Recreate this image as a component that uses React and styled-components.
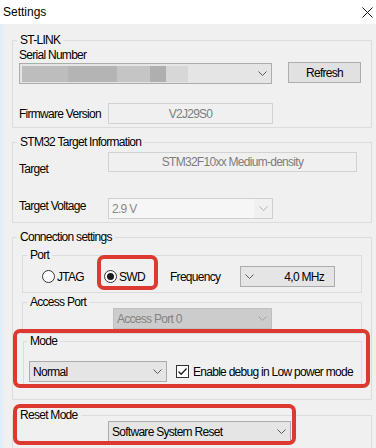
import React from "react";
import styled, { createGlobalStyle } from "styled-components";

const Global = createGlobalStyle`
  html, body { margin: 0; padding: 0; background: #f0f0f0; }
  body { overflow: hidden; }
  * { box-sizing: border-box; }
`;

const FONT = `"Liberation Sans", Arial, sans-serif`;
const RED = "#dc3a31";

const Window = styled.div`
  width: 376px;
  height: 448px;
  overflow: hidden;
  display: flex;
  flex-direction: column;
  background: #f0f0f0;
  font-family: ${FONT};
  font-size: 12px;
  letter-spacing: -0.72px;
  color: #000;
`;

const TitleBar = styled.div`
  flex: none;
  height: 24px;
  background: #fff;
  display: flex;
  align-items: center;
  justify-content: space-between;
  padding: 0 3px;
  font-size: 12px;
  letter-spacing: 0;
`;

const Body = styled.div`
  flex: 1;
  display: flex;
  flex-direction: column;
  border-left: 3px solid #e1eef9;
  padding: 0 4px 0 9px;
`;

const Group = styled.fieldset`
  flex: none;
  margin: ${(p) => p.$top || 0}px 0 0 ${(p) => p.$left || 0}px;
  width: ${(p) => (p.$width ? `${p.$width}px` : "auto")};
  padding: 0;
  border: 1px solid #dcdcdc;
  min-width: 0;
`;

const Legend = styled.legend`
  margin-left: ${(p) => (p.$inset != null ? p.$inset : 4)}px;
  padding: 0 3px;
  height: 12px;
  line-height: 12px;
  white-space: nowrap;
`;

const Content = styled.div`
  height: ${(p) => p.$h}px;
  padding-left: ${(p) => p.$pl || 0}px;
  display: flex;
  flex-direction: column;
  align-items: flex-start;
`;

const Row = styled.div`
  flex: none;
  display: flex;
  align-items: ${(p) => p.$align || "flex-start"};
  margin-top: ${(p) => p.$mt || 0}px;
  height: ${(p) => (p.$h ? `${p.$h}px` : "auto")};
`;

const Caption = styled.span`
  display: block;
  flex: none;
  width: ${(p) => (p.$w ? `${p.$w}px` : "auto")};
  height: 14px;
  line-height: 14px;
  margin-top: ${(p) => p.$mt || 0}px;
  white-space: nowrap;
`;

const ReadOnlyField = styled.div`
  flex: none;
  width: ${(p) => p.$w}px;
  height: ${(p) => p.$h || 21}px;
  display: flex;
  align-items: center;
  justify-content: center;
  border: 1px solid #d2d2d2;
  background: #f0f0f0;
  color: #7d7d7d;
  white-space: nowrap;
`;

const tones = {
  normal: { bg: "#e5e5e5", border: "#acacac", color: "#000", arrow: "#5a5a5a" },
  inactive: { bg: "#cccccc", border: "#bfbfbf", color: "#838383", arrow: "#a2a2a2" },
  disabled: { bg: "#f0f0f0", border: "#cfcfcf", color: "#8a8a8a", arrow: "#b0b0b0" },
};

const ComboBox = styled.div`
  flex: none;
  width: ${(p) => p.$w}px;
  height: ${(p) => p.$h || 21}px;
  margin-left: ${(p) => p.$ml || 0}px;
  margin-top: ${(p) => p.$mt || 0}px;
  display: flex;
  flex-direction: ${(p) => (p.$arrowLeft ? "row-reverse" : "row")};
  align-items: stretch;
  border: 1px solid ${(p) => tones[p.$tone || "normal"].border};
  background: ${(p) => tones[p.$tone || "normal"].bg};
  color: ${(p) => tones[p.$tone || "normal"].color};
  white-space: nowrap;
  overflow: hidden;
`;

const ComboValue = styled.div`
  flex: 1;
  display: flex;
  align-items: center;
  justify-content: ${(p) => (p.$right ? "flex-end" : "flex-start")};
  padding: ${(p) => (p.$right ? "0 10px 0 0" : "0 0 0 3px")};
  background: ${(p) => p.$fill || "transparent"};
  overflow: hidden;
`;

const ArrowCell = styled.div`
  flex: none;
  width: ${(p) => p.$w || 18}px;
  display: flex;
  align-items: center;
  justify-content: center;
`;

const Redacted = styled.div`
  width: 166px;
  height: 16px;
  margin-left: -1px;
  background: linear-gradient(
    to right,
    #bdbdbd 0 46px,
    #b4b4b4 46px 95px,
    #c5c5c5 95px 128px,
    #afafaf 128px 144px,
    #d7d7d7 144px 166px
  );
`;

const Button = styled.button`
  flex: none;
  width: ${(p) => p.$w}px;
  height: 21px;
  margin-left: ${(p) => p.$ml || 0}px;
  margin-top: ${(p) => p.$mt || 0}px;
  padding: 0;
  border: 1px solid #adadad;
  background: #e1e1e1;
  font: inherit;
  letter-spacing: inherit;
  color: #000;
`;

const Option = styled.label`
  position: relative;
  flex: none;
  width: ${(p) => p.$w}px;
  height: 31px;
  display: flex;
  align-items: center;
  gap: 2px;
`;

const RadioCircle = styled.span`
  flex: none;
  width: 13px;
  height: 13px;
  border-radius: 50%;
  border: 1px solid #333;
  background: #fff;
  display: flex;
  align-items: center;
  justify-content: center;
  &::after {
    content: "";
    width: 7px;
    height: 7px;
    border-radius: 50%;
    background: ${(p) => (p.$checked ? "#1b1b1b" : "transparent")};
  }
`;

const CheckRow = styled.label`
  flex: none;
  display: flex;
  align-items: center;
  gap: 4px;
  margin-left: ${(p) => p.$ml || 0}px;
  white-space: nowrap;
`;

const Highlight = styled.div`
  position: relative;
  flex: none;
  margin: ${(p) => p.$top || 0}px 0 0 ${(p) => p.$left || 0}px;
  width: ${(p) => (p.$width ? `${p.$width}px` : "auto")};
  display: flex;
  flex-direction: column;
`;

const Ring = styled.span`
  position: absolute;
  pointer-events: none;
  left: ${(p) => p.$l}px;
  top: ${(p) => p.$t}px;
  width: ${(p) => p.$w}px;
  height: ${(p) => p.$h}px;
  border: 4px solid ${RED};
  border-radius: 7px;
`;

const Chevron = ({ color }) => (
  <svg width="9" height="5" viewBox="0 0 9 5">
    <path d="M0.5 0.5 L4.5 4.5 L8.5 0.5" fill="none" stroke={color} strokeWidth="1" />
  </svg>
);

const CloseIcon = () => (
  <svg width="11" height="11" viewBox="0 0 11 11">
    <path d="M0.5 0.5 L10.5 10.5 M10.5 0.5 L0.5 10.5" stroke="#111" strokeWidth="1" />
  </svg>
);

const CheckBoxIcon = () => (
  <svg width="13" height="13" viewBox="0 0 13 13">
    <rect x="0.5" y="0.5" width="12" height="12" fill="#fff" stroke="#333" />
    <path d="M2.5 6.5 L5.2 9.2 L10.5 3.5" fill="none" stroke="#1b1b1b" strokeWidth="1.3" />
  </svg>
);

const Combo = ({ tone = "normal", value, arrowLeft, right, fill, children, ...rest }) => (
  <ComboBox $tone={tone} $arrowLeft={arrowLeft} {...rest}>
    <ComboValue $right={right} $fill={fill}>{children || value}</ComboValue>
    <ArrowCell $w={arrowLeft ? 16 : 18}>
      <Chevron color={tones[tone].arrow} />
    </ArrowCell>
  </ComboBox>
);

export default function App() {
  return (
    <>
      <Global />
      <Window>
        <TitleBar>
          <span>Settings</span>
          <CloseIcon />
        </TitleBar>
        <Body>
          <Group $top={10}>
            <Legend>ST-LINK</Legend>
            <Content $h={81} $pl={6}>
              <Caption $mt={2}>Serial Number</Caption>
              <Row $mt={1}>
                <Combo $w={253}>
                  <Redacted />
                </Combo>
                <Button $w={73} $ml={16} $mt={-1}>Refresh</Button>
              </Row>
              <Row $mt={19} $align="center">
                <Caption $w={89}>Firmware Version</Caption>
                <ReadOnlyField $w={165}>V2J29S0</ReadOnlyField>
              </Row>
            </Content>
          </Group>

          <Group $top={8}>
            <Legend>STM32 Target Information</Legend>
            <Content $h={74} $pl={6}>
              <Row $mt={4}>
                <Caption $w={89} $mt={10}>Target</Caption>
                <ReadOnlyField $w={249} $h={20}>STM32F10xx Medium-density</ReadOnlyField>
              </Row>
              <Row $mt={22}>
                <Caption $w={89} $mt={1}>Target Voltage</Caption>
                <Combo $w={165} tone="disabled" value="2.9 V" fill="#f6f6f6" />
              </Row>
            </Content>
          </Group>

          <Group $top={8}>
            <Legend>Connection settings</Legend>
            <Content $h={156} $pl={9}>
              <Group $top={6} $width={340}>
                <Legend>Port</Legend>
                <Content $h={31} $pl={19}>
                  <Row $h={31} $align="center">
                    <Option $w={62}>
                      <RadioCircle />
                      <span>JTAG</span>
                    </Option>
                    <Option $w={66}>
                      <Ring $l={-7} $t={-6} $w={61} $h={35} />
                      <RadioCircle $checked />
                      <span>SWD</span>
                    </Option>
                    <Caption $w={70}>Frequency</Caption>
                    <Combo $w={95} arrowLeft right value="4,0 MHz" />
                  </Row>
                </Content>
              </Group>

              <Group $top={3} $width={340}>
                <Legend>Access Port</Legend>
                <Content $h={25} $pl={90}>
                  <Combo $w={159} tone="inactive" value="Access Port 0" />
                </Content>
              </Group>

              <Highlight $top={1} $left={1} $width={339}>
                <Ring $l={-10} $t={-6} $w={357} $h={59} />
                <Group>
                  <Legend $inset={3}>Mode</Legend>
                  <Content $h={37} $pl={5}>
                    <Row $mt={14} $align="center">
                      <Combo $w={138} value="Normal" />
                      <CheckRow $ml={9}>
                        <CheckBoxIcon />
                        <span>Enable debug in Low power mode</span>
                      </CheckRow>
                    </Row>
                  </Content>
                </Group>
              </Highlight>
            </Content>
          </Group>

          <Highlight $top={9}>
            <Ring $l={1} $t={-5} $w={283} $h={41} />
            <Group>
              <Legend>Reset Mode</Legend>
              <Content $h={40} $pl={95}>
                <Combo $w={183} value="Software System Reset" />
              </Content>
            </Group>
          </Highlight>
        </Body>
      </Window>
    </>
  );
}
